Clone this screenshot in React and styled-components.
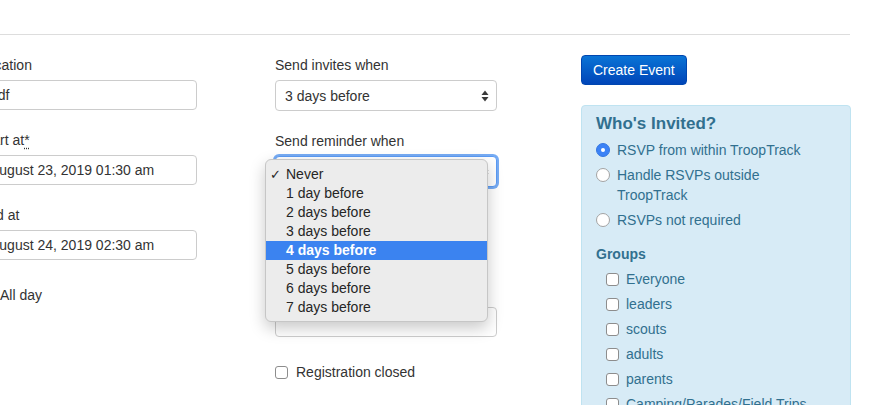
import React from 'react';
import styled, { createGlobalStyle } from 'styled-components';

const GlobalStyle = createGlobalStyle`
  html, body {
    margin: 0;
    padding: 0;
    background: #fff;
    overflow: hidden;
  }
  body {
    font-family: 'Liberation Sans', Arial, Helvetica, sans-serif;
    font-size: 14px;
    color: #333;
  }
`;

const Page = styled.div`
  width: 887px;
  height: 405px;
  overflow: hidden;
`;

const TopRule = styled.div`
  width: 850px;
  height: 34px;
  border-bottom: 1px solid #dddddd;
`;

const Columns = styled.div`
  display: flex;
  align-items: flex-start;
  margin-left: -21px;
  padding-top: 20px;
`;

const Column = styled.div`
  width: ${p => p.$width}px;
  margin-right: ${p => p.$gap || 0}px;
  flex-shrink: 0;
`;

const FormGroup = styled.div`
  margin-bottom: 20px;
  position: relative;
`;

const Label = styled.label`
  display: block;
  line-height: 20px;
  margin-bottom: 5px;
  color: #333;
`;

const Required = styled.abbr`
  text-decoration: underline dotted;
  text-underline-offset: 3px;
  cursor: help;
`;

const TextInput = styled.div`
  box-sizing: border-box;
  width: ${p => (p.$width ? `${p.$width}px` : 'auto')};
  height: 30px;
  border: 1px solid #cccccc;
  border-radius: 4px;
  padding: 0 10px;
  display: flex;
  align-items: center;
  color: #333;
  background: #fff;
  white-space: nowrap;
  overflow: hidden;
`;

const SelectBox = styled.div`
  box-sizing: border-box;
  height: 31px;
  border: 1px solid ${p => (p.$focused ? '#5b9bf4' : '#cccccc')};
  border-radius: 4px;
  padding: 0 7px 0 9px;
  display: flex;
  align-items: center;
  justify-content: space-between;
  background: #fff;
  color: #333;
  box-shadow: ${p => (p.$focused ? '0 0 0 2px rgba(74, 144, 240, 0.75)' : 'none')};
`;

const CheckRow = styled.label`
  display: flex;
  align-items: center;
  gap: 8px;
  line-height: 20px;
  margin-top: 25px;
  color: #333;
`;

const Box = styled.span`
  box-sizing: border-box;
  width: 13px;
  height: 13px;
  border: 1px solid #8d8d8d;
  border-radius: 3px;
  background: #fff;
  flex-shrink: 0;
`;

const Popup = styled.div`
  position: absolute;
  left: -10px;
  top: 28px;
  width: 223px;
  box-sizing: border-box;
  padding: 5px 0 4px;
  background: #ececec;
  border: 1px solid #c6c6c6;
  border-radius: 6px;
  box-shadow: 0 6px 16px rgba(0, 0, 0, 0.22);
  z-index: 5;
`;

const MenuItem = styled.div`
  position: relative;
  height: 19px;
  line-height: 19px;
  padding-left: 20px;
  font-size: 14px;
  color: ${p => (p.$active ? '#fff' : '#262626')};
  background: ${p => (p.$active ? '#3b83f0' : 'transparent')};
  font-weight: ${p => (p.$active ? 'bold' : 'normal')};
`;

const Check = styled.span`
  position: absolute;
  left: 4px;
  top: 0;
  font-family: 'DejaVu Sans', sans-serif;
  font-size: 13px;
  font-weight: bold;
`;

const CreateButton = styled.button`
  box-sizing: border-box;
  height: 30px;
  padding: 0 11px;
  border: 1px solid #0046b0;
  border-radius: 4px;
  background: linear-gradient(#0a74d6, #0045b8);
  color: #fff;
  font-family: 'Liberation Sans', Arial, sans-serif;
  font-size: 14px;
  display: block;
  margin-bottom: 20px;
`;

const InvitePanel = styled.div`
  box-sizing: border-box;
  background: #d7ebf6;
  border: 1px solid #bfe3f1;
  border-radius: 4px;
  padding: 7px 14px 20px;
  color: #31708f;
  min-height: 320px;
`;

const PanelTitle = styled.h3`
  margin: 0 0 5px;
  font-size: 17px;
  line-height: 22px;
  font-weight: bold;
`;

const OptionRow = styled.div`
  display: flex;
  align-items: flex-start;
  gap: 7px;
  margin-bottom: 5px;
  line-height: 20px;
`;

const OptionText = styled.span`
  max-width: 205px;
`;

const Radio = styled.span`
  box-sizing: border-box;
  width: 14px;
  height: 14px;
  margin-top: 3px;
  border-radius: 50%;
  flex-shrink: 0;
  display: flex;
  align-items: center;
  justify-content: center;
  background: ${p => (p.$checked ? '#3b82f6' : '#fff')};
  border: 1px solid ${p => (p.$checked ? '#3577e0' : '#a3a3a3')};

  &::after {
    content: '';
    width: 4px;
    height: 4px;
    border-radius: 50%;
    background: #fff;
    display: ${p => (p.$checked ? 'block' : 'none')};
  }
`;

const GroupsTitle = styled.div`
  font-weight: bold;
  line-height: 20px;
  margin: 14px 0 5px;
`;

const GroupRow = styled.div`
  display: flex;
  align-items: center;
  gap: 7px;
  padding-left: 10px;
  line-height: 20px;
  margin-bottom: 5px;
  white-space: nowrap;
`;

const Arrows = () => (
  <svg width="8" height="12" viewBox="0 0 8 12">
    <path d="M4 0.5 L7.5 5 L0.5 5 Z" fill="#3a3a3a" />
    <path d="M4 11.5 L7.5 7 L0.5 7 Z" fill="#3a3a3a" />
  </svg>
);

const reminderOptions = [
  'Never',
  '1 day before',
  '2 days before',
  '3 days before',
  '4 days before',
  '5 days before',
  '6 days before',
  '7 days before',
];

const groups = ['Everyone', 'leaders', 'scouts', 'adults', 'parents', 'Camping/Parades/Field Trips'];

export default function App() {
  return (
    <Page>
      <GlobalStyle />
      <TopRule />
      <Columns>
        <Column $width={218} $gap={78}>
          <FormGroup>
            <Label>Location</Label>
            <TextInput>adf</TextInput>
          </FormGroup>
          <FormGroup>
            <Label>
              Start at<Required title="required">*</Required>
            </Label>
            <TextInput>August 23, 2019 01:30 am</TextInput>
          </FormGroup>
          <FormGroup>
            <Label>End at</Label>
            <TextInput>August 24, 2019 02:30 am</TextInput>
          </FormGroup>
          <CheckRow>
            <Box />
            All day
          </CheckRow>
        </Column>

        <Column $width={222} $gap={84}>
          <FormGroup>
            <Label>Send invites when</Label>
            <SelectBox>
              <span>3 days before</span>
              <Arrows />
            </SelectBox>
          </FormGroup>
          <FormGroup>
            <Label>Send reminder when</Label>
            <SelectBox $focused>
              <span>Never</span>
              <Arrows />
            </SelectBox>
            <Popup>
              {reminderOptions.map((opt, i) => (
                <MenuItem key={opt} $active={i === 4}>
                  {i === 0 && <Check>✓</Check>}
                  {opt}
                </MenuItem>
              ))}
            </Popup>
          </FormGroup>
          <FormGroup>
            <Label>Cost</Label>
            <TextInput $width={150} />
          </FormGroup>
          <FormGroup>
            <Label>Maximum attendees</Label>
            <TextInput />
          </FormGroup>
          <CheckRow>
            <Box />
            Registration closed
          </CheckRow>
        </Column>

        <Column $width={270}>
          <CreateButton>Create Event</CreateButton>
          <InvitePanel>
            <PanelTitle>Who's Invited?</PanelTitle>
            <OptionRow>
              <Radio $checked />
              <OptionText>RSVP from within TroopTrack</OptionText>
            </OptionRow>
            <OptionRow>
              <Radio />
              <OptionText>Handle RSVPs outside TroopTrack</OptionText>
            </OptionRow>
            <OptionRow>
              <Radio />
              <OptionText>RSVPs not required</OptionText>
            </OptionRow>
            <GroupsTitle>Groups</GroupsTitle>
            {groups.map(g => (
              <GroupRow key={g}>
                <Box />
                {g}
              </GroupRow>
            ))}
          </InvitePanel>
        </Column>
      </Columns>
    </Page>
  );
}
